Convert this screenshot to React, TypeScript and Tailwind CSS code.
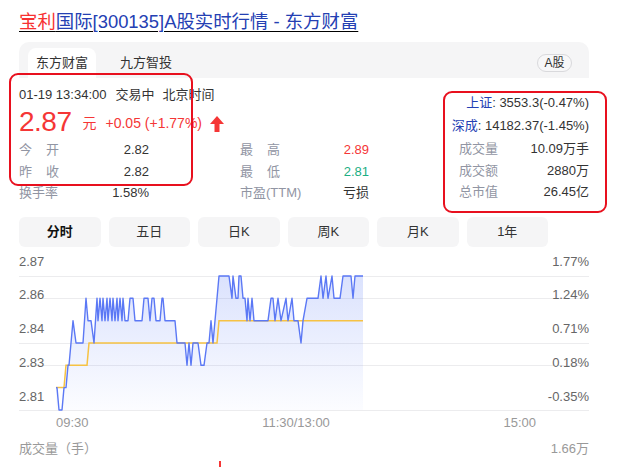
import React from "react";

const Y = (v: number) => 276 + (7 - v) * 22.33;

const bluePts: [number, number][] = [
  [56, 2], [57, 2], [59, 1], [62, 1], [64, 2], [66, 2], [68, 3], [69, 3], [73, 5], [76, 4], [83, 4],
  [86, 6], [88, 5], [91, 5], [94, 4], [97, 6], [98, 5], [100, 6], [102, 5], [103, 6], [105, 5],
  [107, 6], [108, 5], [110, 6], [112, 5], [113, 6], [115, 5], [117, 6], [118, 5], [120, 6],
  [122, 5], [123, 6], [125, 5], [128, 5], [130, 6], [133, 6], [135, 5], [142, 5], [144, 6],
  [148, 6], [150, 5], [152, 6], [154, 6], [156, 5], [160, 5], [162, 6], [163, 6], [165, 5],
  [175, 5], [177, 4], [185, 4], [187, 3], [189, 4], [191, 3], [193, 4], [198, 4], [201, 3],
  [204, 3], [207, 4], [209, 4], [211, 5], [213, 4], [219, 7], [229, 7], [232, 6], [233, 7],
  [236, 6], [238, 6], [239, 7], [241, 7], [243, 6], [245, 6], [247, 5], [248, 6], [250, 5],
  [252, 6], [254, 5], [257, 5], [268, 5], [271, 6], [273, 6], [275, 5], [278, 6], [281, 5],
  [286, 6], [288, 5], [292, 6], [294, 5], [298, 5], [301, 4], [303, 5], [307, 6], [318, 6],
  [321, 7], [323, 6], [326, 7], [328, 6], [332, 7], [334, 6], [340, 6], [343, 7], [351, 7],
  [353, 6], [355, 7], [363, 7],
];

const avgPts: [number, number][] = [
  [56, 2], [64, 2], [66, 3], [87, 3], [89, 4], [217, 4], [219, 5], [363, 5],
];

const toPath = (pts: [number, number][]) =>
  pts.map((p, i) => `${i === 0 ? "M" : "L"}${p[0]},${Y(p[1]).toFixed(1)}`).join(" ");

const bluePath = toPath(bluePts);
const fillPath = `M56,410 ${bluePts.map((p) => `L${p[0]},${Y(p[1]).toFixed(1)}`).join(" ")} L363,410 Z`;
const avgPath = toPath(avgPts);

function UpArrow() {
  return (
    <svg width="14" height="16" viewBox="0 0 14 16">
      <path d="M7 0 L14 8 L9.5 8 L9.5 16 L4.5 16 L4.5 8 L0 8 Z" fill="#f53636" />
    </svg>
  );
}

function Label2({ text }: { text: string }) {
  return (
    <span className="inline-block w-[40px] text-[#9195a3] [text-align-last:justify]">{text}</span>
  );
}

export default function App() {
  const font = "font-['Liberation_Sans','Noto_Sans_CJK_SC',sans-serif]";
  const tabs = ["分时", "五日", "日K", "周K", "月K", "1年"];
  return (
    <div className={`relative w-[640px] h-[467px] overflow-hidden bg-white ${font}`}>
      <div className="px-[19px] pt-[10px] w-[608px]">
        {/* Title */}
        <div className="h-[24px] leading-[24px] text-[18.4px]">
          <span className="underline decoration-[1px] underline-offset-[3px]">
            <span className="text-[#f73131]">宝利</span>
            <span className="text-[#2440b3]">国际[300135]A股实时行情 - 东方财富</span>
          </span>
        </div>

        {/* Tab bar */}
        <div className="mt-[8px] h-[36px] bg-[#f5f5f6] rounded-t-[10px] flex items-end pl-[9px] pr-[17px] w-[570px]">
          <div className="h-[30px] px-[8px] bg-white rounded-t-[8px] flex items-center text-[13px] text-[#333]">
            东方财富
          </div>
          <div className="h-[30px] ml-[16px] px-[8px] flex items-center text-[13px] text-[#333]">
            九方智投
          </div>
          <div className="ml-auto self-center mt-[6px] h-[18px] w-[35px] rounded-full border border-[#d9d9dc] bg-[#f7f7f8] flex items-center justify-center text-[12px] text-[#333]">
            A股
          </div>
        </div>

        {/* Quote section */}
        <div className="flex w-[570px]">
          <div className="flex-1 pt-[8px]">
            <div className="h-[18px] flex items-center text-[13px] text-[#333]">
              <span>01-19 13:34:00</span>
              <span className="ml-[9px]">交易中</span>
              <span className="ml-[8px]">北京时间</span>
            </div>
            <div className="h-[35px] flex items-center text-[#f53636]">
              <span className="text-[28px] leading-[32px] tracking-[-0.5px]">2.87</span>
              <span className="ml-[11px] mt-[4px] text-[14px]">元</span>
              <span className="ml-[9px] mt-[4px] text-[14px]">+0.05 (+1.77%)</span>
              <span className="ml-[8px] mt-[4px] flex items-center"><UpArrow /></span>
            </div>
            <div className="grid grid-cols-[130px_129px] gap-x-[91px] text-[13px]">
              <div className="h-[21.5px] flex items-center justify-between"><Label2 text="今开" /><span className="text-[#333]">2.82</span></div>
              <div className="h-[21.5px] flex items-center justify-between"><Label2 text="最高" /><span className="text-[#f53636]">2.89</span></div>
              <div className="h-[21.5px] flex items-center justify-between"><Label2 text="昨收" /><span className="text-[#333]">2.82</span></div>
              <div className="h-[21.5px] flex items-center justify-between"><Label2 text="最低" /><span className="text-[#1bae83]">2.81</span></div>
              <div className="h-[21.5px] flex items-center justify-between"><span className="text-[#9195a3]">换手率</span><span className="text-[#333]">1.58%</span></div>
              <div className="h-[21.5px] flex items-center justify-between"><span className="text-[#9195a3]">市盈(TTM)</span><span className="text-[#333]">亏损</span></div>
            </div>
          </div>
          <div className="w-[150px] pt-[14px] text-[13px]">
            <div className="h-[22px] flex items-center justify-end text-[#333]">
              <span className="text-[#2440b3]">上证</span>: 3553.3(-0.47%)
            </div>
            <div className="h-[24px] flex items-center justify-end text-[#333]">
              <span className="text-[#2440b3]">深成</span>: 14182.37(-1.45%)
            </div>
            <div className="pl-[20px]">
              <div className="h-[21.5px] flex items-center justify-between"><span className="text-[#9195a3]">成交量</span><span className="text-[#333]">10.09万手</span></div>
              <div className="h-[21.5px] flex items-center justify-between"><span className="text-[#9195a3]">成交额</span><span className="text-[#333]">2880万</span></div>
              <div className="h-[21.5px] flex items-center justify-between"><span className="text-[#9195a3]">总市值</span><span className="text-[#333]">26.45亿</span></div>
            </div>
          </div>
        </div>

        {/* Period buttons */}
        <div className="mt-[13px] flex gap-[8px]">
          {tabs.map((t, i) => (
            <div
              key={t}
              className={`w-[81.5px] h-[30px] rounded-[6px] bg-[#f5f5f6] flex items-center justify-center text-[13px] ${i === 0 ? "font-bold text-[#111]" : "text-[#333]"}`}
            >
              {t}
            </div>
          ))}
        </div>

        {/* Chart */}
        <div className="relative mt-[3px] h-[162px] w-[570px]">
          <svg className="absolute inset-0" width="570" height="162" viewBox="19 250 570 162">
            <defs>
              <linearGradient id="fillg" x1="0" y1="276" x2="0" y2="410" gradientUnits="userSpaceOnUse">
                <stop offset="0" stopColor="#5b7cf7" stopOpacity="0.22" />
                <stop offset="1" stopColor="#5b7cf7" stopOpacity="0.02" />
              </linearGradient>
            </defs>
            {[276, 298, 343, 365, 410].map((y) => (
              <line key={y} x1="19" x2="589" y1={y + 0.5} y2={y + 0.5} stroke="#ececee" strokeWidth="1.2" />
            ))}
            <path d={fillPath} fill="url(#fillg)" />
            <path d={avgPath} fill="none" stroke="#f6c243" strokeWidth="1.5" />
            <path d={bluePath} fill="none" stroke="#5b78f5" strokeWidth="1.4" strokeLinejoin="round" />
          </svg>
          <div className="relative h-full flex justify-between text-[13px] text-[#666] leading-[16px]">
            <div className="flex flex-col justify-between pt-[4px] pb-[7px]">
              <span>2.87</span>
              <span>2.86</span>
              <span>2.84</span>
              <span>2.83</span>
              <span>2.81</span>
            </div>
            <div className="flex flex-col justify-between items-end pt-[4px] pb-[7px]">
              <span>1.77%</span>
              <span>1.24%</span>
              <span>0.71%</span>
              <span>0.18%</span>
              <span>-0.35%</span>
            </div>
          </div>
        </div>

        {/* Time axis */}
        <div className="mt-[3px] ml-[37px] w-[480px] h-[16px] flex justify-between items-center text-[13px] text-[#999]">
          <span>09:30</span>
          <span>11:30/13:00</span>
          <span>15:00</span>
        </div>

        {/* Volume header */}
        <div className="mt-[10px] h-[16px] flex justify-between items-center text-[13px] text-[#999] w-[570px]">
          <span>成交量（手）</span>
          <span>1.66万</span>
        </div>
        <div className="mt-[4px] ml-[200px] w-[1.5px] h-[10px] bg-[#f53636]" />
      </div>

      {/* Red annotation boxes */}
      <div className="absolute left-[9px] top-[73px] w-[184px] h-[113px] border-2 border-[#e8101e] rounded-[9px]" />
      <div className="absolute left-[443px] top-[91px] w-[164px] h-[122px] border-2 border-[#e8101e] rounded-[9px]" />
    </div>
  );
}
